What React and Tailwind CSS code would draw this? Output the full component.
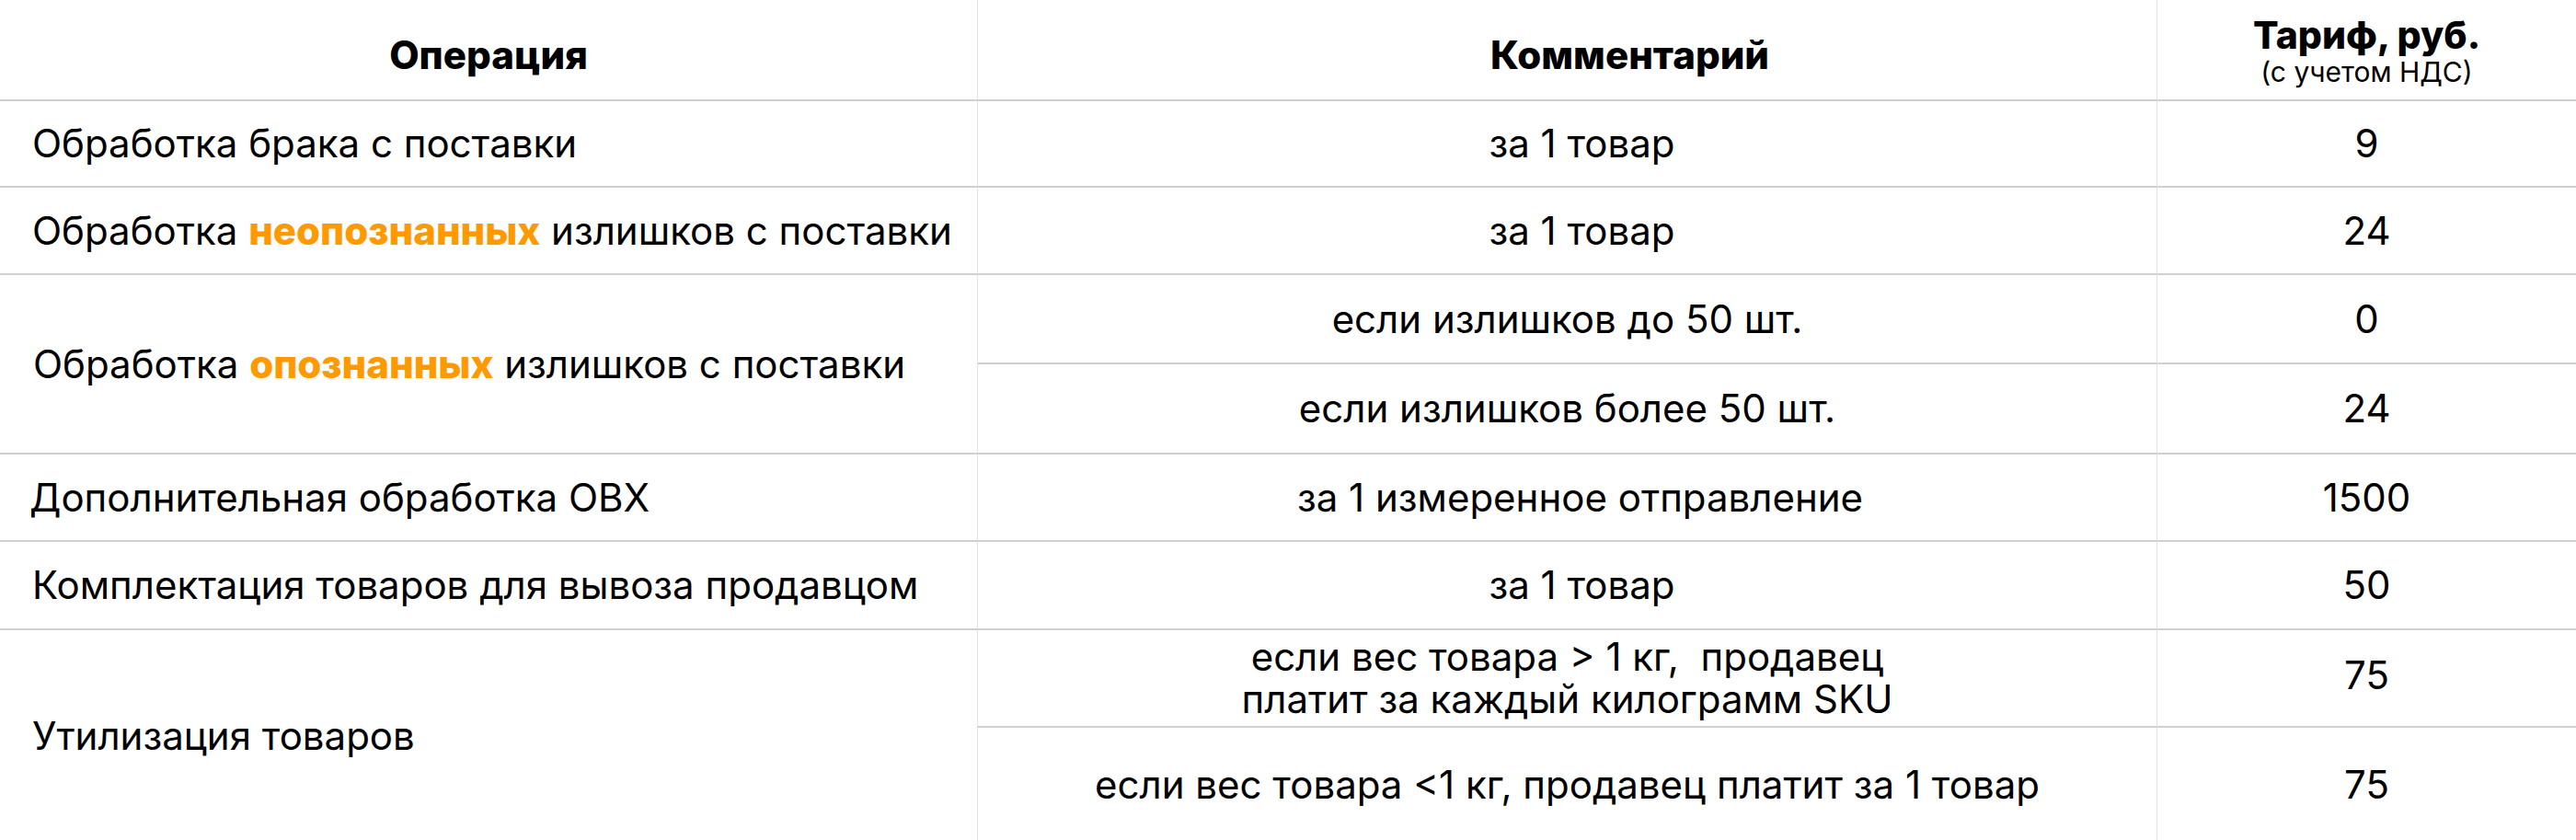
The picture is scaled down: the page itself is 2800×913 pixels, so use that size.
const font = { fontFamily: 'Inter, "Noto Sans", sans-serif' }

function Orange({ children }) {
  return <span className="font-extrabold text-[#ff9900]">{children}</span>
}

const line = 'border-b-2 border-b-[#d0d0d0]'
const vline = 'border-r border-r-[#e2e2e2]'
const cellL = `flex items-center ${line} ${vline} text-[42px] leading-none`
const cellM = `flex items-center justify-center ${line} ${vline} text-center text-[42px]`
const cellR = `flex items-center justify-center ${line} text-center text-[42px] leading-none`

export default function App() {
  return (
    <div className="w-[2800px] h-[913px] overflow-hidden bg-white text-black" style={font}>
      <div className="grid grid-cols-[1063px_1282px_455px] grid-rows-[110px_94px_95px_97px_98px_95px_96px_106px_124px]">
        {/* header */}
        <div className={`flex items-center justify-center ${line} ${vline} pt-[10px] text-[42px] font-extrabold`}>
          Операция
        </div>
        <div className={`flex items-center justify-center ${line} ${vline} pl-[136px] pt-[10px] text-[42px] font-extrabold`}>
          Комментарий
        </div>
        <div className={`flex flex-col items-center justify-center ${line} pt-[4px]`}>
          <div className="text-[41px] font-extrabold leading-[44px]">Тариф, руб.</div>
          <div className="text-[30px] leading-[36px]">(с учетом НДС)</div>
        </div>

        {/* row 1 */}
        <div className={`${cellL} pl-[35px]`}>Обработка брака с поставки</div>
        <div className={`${cellM} pl-[32px] leading-none`}>за 1 товар</div>
        <div className={cellR}>9</div>

        {/* row 2 */}
        <div className={`${cellL} pl-[35px]`}>
          <span>
            Обработка <Orange>неопознанных</Orange> излишков с поставки
          </span>
        </div>
        <div className={`${cellM} pl-[32px] leading-none`}>за 1 товар</div>
        <div className={cellR}>24</div>

        {/* row 3 */}
        <div className={`${cellL} row-span-2 pl-[36px]`}>
          <span>
            Обработка <Orange>опознанных</Orange> излишков с поставки
          </span>
        </div>
        <div className={`${cellM} leading-none`}>если излишков до 50 шт.</div>
        <div className={cellR}>0</div>
        <div className={`${cellM} leading-none`}>если излишков более 50 шт.</div>
        <div className={cellR}>24</div>

        {/* row 4 */}
        <div className={`${cellL} pl-[32px]`}>Дополнительная обработка ОВХ</div>
        <div className={`${cellM} pl-[28px] leading-none`}>за 1 измеренное отправление</div>
        <div className={cellR}>1500</div>

        {/* row 5 */}
        <div className={`${cellL} pl-[35px]`}>Комплектация товаров для вывоза продавцом</div>
        <div className={`${cellM} pl-[32px] leading-none`}>за 1 товар</div>
        <div className={cellR}>50</div>

        {/* row 6 */}
        <div className={`row-span-2 flex items-center ${vline} pl-[35px] text-[42px] leading-none`}>
          Утилизация товаров
        </div>
        <div className={cellM}>
          <p className="leading-[46px]">
            если вес товара &gt; 1 кг,&nbsp; продавец
            <br />
            платит за каждый килограмм SKU
          </p>
        </div>
        <div className={`${cellR} pb-[6px]`}>75</div>
        <div className={`flex items-center justify-center ${vline} text-center text-[42px] leading-none`}>
          если вес товара &lt;1 кг, продавец платит за 1 товар
        </div>
        <div className="flex items-center justify-center text-center text-[42px] leading-none">75</div>
      </div>
    </div>
  )
}
